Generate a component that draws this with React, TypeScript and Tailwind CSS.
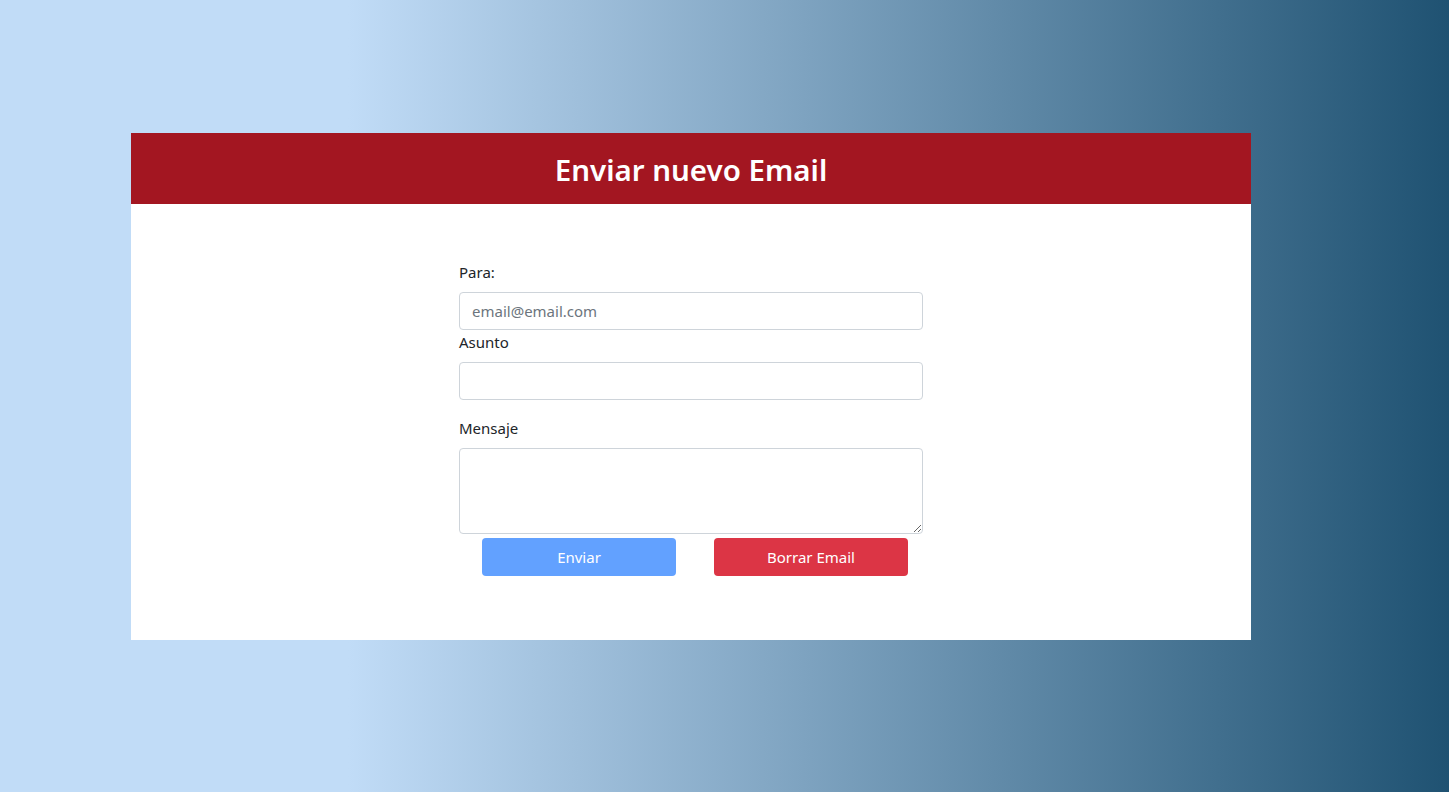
export default function App() {
  return (
    <main
      className="min-h-screen w-full bg-[linear-gradient(to_right,#c1dcf7_24%,#1f5272_100%)] pt-[133px]"
      style={{ fontFamily: '"Noto Sans", "Open Sans", sans-serif' }}
    >
      <div className="ml-[131px] w-[1120px] bg-white">
        <div className="flex h-[71px] items-center justify-center bg-[#a31621] pt-[3px]">
          <h1 className="text-[29.5px] font-semibold text-white">Enviar nuevo Email</h1>
        </div>
        <form className="mx-auto w-[464px] pt-[56px] pb-[64px] text-[#212529]">
          <label className="block text-[15px] leading-[24px]">Para:</label>
          <input
            type="email"
            placeholder="email@email.com"
            className="mt-2 block h-[38px] w-full rounded border border-[#ced4da] px-3 text-[15px] placeholder:text-[#6c757d] outline-none"
          />
          <label className="block text-[15px] leading-[24px]">Asunto</label>
          <input
            type="text"
            className="mt-2 block h-[38px] w-full rounded border border-[#ced4da] px-3 text-[15px] outline-none"
          />
          <label className="mt-4 block text-[15px] leading-[24px]">Mensaje</label>
          <textarea className="mt-2 block h-[86px] w-full rounded border border-[#ced4da] px-3 py-1.5 text-[15px] outline-none"></textarea>
          <div className="mt-1 flex gap-[38px] pl-[23px]">
            <button type="button" className="h-[38px] w-[194px] rounded bg-[#62a1ff] text-[15px] text-white">
              Enviar
            </button>
            <button type="button" className="h-[38px] w-[194px] rounded bg-[#dc3545] text-[15px] text-white">
              Borrar Email
            </button>
          </div>
        </form>
      </div>
    </main>
  )
}
